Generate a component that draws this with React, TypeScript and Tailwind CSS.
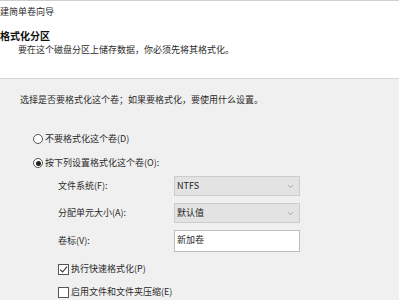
import { ChevronDown } from "lucide-react";

const font = { fontFamily: '"Noto Sans CJK SC", "Microsoft YaHei", sans-serif' };

function Radio({ checked, label }: { checked?: boolean; label: string }) {
  return (
    <div className="flex items-center h-[12px]">
      <span className="w-[10px] h-[10px] rounded-full border border-[#555] bg-white flex items-center justify-center">
        {checked && <span className="w-[5px] h-[5px] rounded-full bg-[#222]" />}
      </span>
      <span className="ml-[2px]">{label}</span>
    </div>
  );
}

function Check({ checked, label }: { checked?: boolean; label: string }) {
  return (
    <div className="flex items-center h-[12px]">
      <span className="w-[11px] h-[11px] border border-[#555] bg-white flex items-center justify-center">
        {checked && (
          <svg width="9" height="9" viewBox="0 0 9 9">
            <path d="M1.2 4.6 L3.6 7 L8 1.6" fill="none" stroke="#333" strokeWidth="1.1" />
          </svg>
        )}
      </span>
      <span className="ml-[2px]">{label}</span>
    </div>
  );
}

function Select({ value }: { value: string }) {
  return (
    <div className="w-[126px] h-[20px] bg-[#e3e3e3] border border-[#cccccc] flex items-center justify-between pl-[2px] pr-[4px]">
      <span className="text-[#222]">{value}</span>
      <ChevronDown size={9} strokeWidth={1.5} className="text-[#777]" />
    </div>
  );
}

export default function App() {
  return (
    <div className="w-[399px] h-[300px] overflow-hidden bg-[#f0f0f0] text-[9px] leading-[12px] text-[#2a2a2a]" style={font}>
      <div className="h-[79px] bg-white border-t border-[#cfcfcf] border-b border-b-[#d6d6d6]">
        <div className="mt-[5px]">建简单卷向导</div>
        <div className="mt-[12px] font-bold text-[10px] text-[#111]">格式化分区</div>
        <div className="mt-[2px] ml-[18px]">要在这个磁盘分区上储存数据，你必须先将其格式化。</div>
      </div>
      <div className="pl-[20px]">
        <div className="mt-[15px]">选择是否要格式化这个卷；如果要格式化，要使用什么设置。</div>
        <div className="ml-[13px] mt-[27px] flex flex-col gap-[12px]">
          <Radio label="不要格式化这个卷(D)" />
          <Radio checked label="按下列设置格式化这个卷(O):" />
        </div>
        <div className="ml-[38px] mt-[7px] grid grid-cols-[116px_126px] gap-y-[7px] items-center">
          <span>文件系统(F):</span>
          <Select value="NTFS" />
          <span>分配单元大小(A):</span>
          <Select value="默认值" />
          <span>卷标(V):</span>
          <div className="w-[126px] h-[22px] bg-white border border-[#bdbdbd] pl-[2px] flex items-start pt-[3px]">新加卷</div>
        </div>
        <div className="ml-[38px] mt-[11px] flex flex-col gap-[11px]">
          <Check checked label="执行快速格式化(P)" />
          <Check label="启用文件和文件夹压缩(E)" />
        </div>
      </div>
    </div>
  );
}
